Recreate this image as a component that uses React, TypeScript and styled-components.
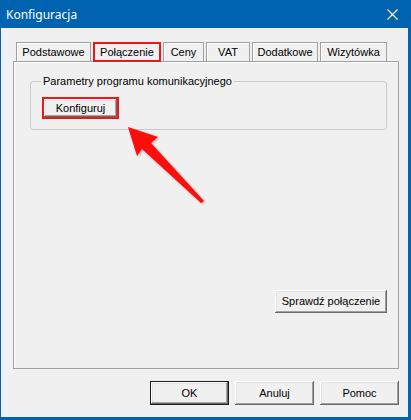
import React from 'react';
import styled, { createGlobalStyle, css } from 'styled-components';

const GlobalStyle = createGlobalStyle`
  html, body { margin: 0; padding: 0; background: #ffffff; }
  body { font-family: "Liberation Sans", Arial, sans-serif; }
  * { box-sizing: border-box; }
`;

const RED = '#f21515';

const Window = styled.div`
  position: relative;
  width: 411px;
  height: 420px;
  background: #0063b1;
  display: flex;
  flex-direction: column;
  overflow: hidden;
`;

const TitleBar = styled.div`
  height: 28px;
  flex: none;
  display: flex;
  align-items: center;
  justify-content: space-between;
  padding: 0 13px 0 6px;
  color: #ffffff;
  font-family: "Noto Sans", "Open Sans", sans-serif;
  font-size: 12px;
`;

const Body = styled.div`
  flex: 1;
  margin: 0 3px 3px 1px;
  background: #f0f0f0;
  padding: 14px 9px 12px 12px;
  display: flex;
  flex-direction: column;
  font-family: "Liberation Sans", Arial, sans-serif;
  font-size: 11px;
  color: #000000;
`;

const TabStrip = styled.div`
  height: 19px;
  flex: none;
  display: flex;
  align-items: flex-start;
  gap: 2px;
  padding-left: 3px;
  position: relative;
  z-index: 1;
`;

const Tab = styled.div<{ $w: number; $active?: boolean }>`
  width: ${(p) => p.$w}px;
  height: 19px;
  border: 1px solid #a0a0a0;
  border-bottom: none;
  box-shadow: inset 1px 1px 0 #ffffff;
  background: #f0f0f0;
  text-align: center;
  line-height: 18px;
  white-space: nowrap;
  ${(p) =>
    p.$active &&
    css`
      height: 20px;
      border: 2px solid ${RED};
      box-shadow: none;
      line-height: 16px;
    `}
`;

const Panel = styled.div`
  height: 308px;
  flex: none;
  border: 1px solid #a0a0a0;
  box-shadow: inset 1px 1px 0 #ffffff;
  padding: 0 11px 55px 16px;
  display: flex;
  flex-direction: column;
`;

const GroupBox = styled.fieldset`
  margin: 13px 0 0 0;
  padding: 11px 0 12px 13px;
  border: 1px solid #cacaca;
  border-radius: 3px;
  min-width: 0;
`;

const Legend = styled.legend`
  margin-left: -3px;
  padding: 0 2px;
  line-height: 13px;
`;

const Button = styled.button<{ $w: number; $h: number; $default?: boolean; $highlight?: boolean }>`
  width: ${(p) => p.$w}px;
  height: ${(p) => p.$h}px;
  padding: 0;
  margin: 0;
  font: inherit;
  color: #000000;
  background: #f0f0f0;
  border: none;
  line-height: ${(p) => p.$h}px;
  box-shadow: inset -1px -1px 0 #696969, inset 1px 1px 0 #ffffff,
    inset -2px -2px 0 #a0a0a0, inset 2px 2px 0 #e3e3e3;
  ${(p) =>
    p.$default &&
    css`
      border: 1px solid #1a1a1a;
      line-height: ${p.$h - 2}px;
    `}
  ${(p) =>
    p.$highlight &&
    css`
      outline: 2px solid ${RED};
      outline-offset: 0;
    `}
`;

const BottomRight = styled.div`
  margin-top: auto;
  display: flex;
  justify-content: flex-end;
`;

const Footer = styled.div`
  margin-top: 12px;
  display: flex;
  justify-content: flex-end;
  gap: 6px;
`;

const ArrowSvg = styled.svg`
  position: absolute;
  left: 120px;
  top: 120px;
  pointer-events: none;
  overflow: visible;
`;

const tabs: { label: string; w: number; active?: boolean }[] = [
  { label: 'Podstawowe', w: 75 },
  { label: 'Połączenie', w: 68, active: true },
  { label: 'Ceny', w: 41 },
  { label: 'VAT', w: 44 },
  { label: 'Dodatkowe', w: 66 },
  { label: 'Wizytówka', w: 67 },
];

export default function App() {
  return (
    <>
      <GlobalStyle />
      <Window>
        <TitleBar>
          <span>Konfiguracja</span>
          <svg width="11" height="11" viewBox="0 0 11 11">
            <path d="M0.5 0.5 L10.5 10.5 M10.5 0.5 L0.5 10.5" stroke="#ffffff" strokeWidth="1.1" />
          </svg>
        </TitleBar>
        <Body>
          <TabStrip>
            {tabs.map((t) => (
              <Tab key={t.label} $w={t.w} $active={t.active}>
                {t.label}
              </Tab>
            ))}
          </TabStrip>
          <Panel>
            <GroupBox>
              <Legend>Parametry programu komunikacyjnego</Legend>
              <Button $w={73} $h={18} $highlight>
                Konfiguruj
              </Button>
            </GroupBox>
            <BottomRight>
              <Button $w={112} $h={23}>
                Sprawdź połączenie
              </Button>
            </BottomRight>
          </Panel>
          <Footer>
            <Button $w={79} $h={24} $default>
              OK
            </Button>
            <Button $w={79} $h={24}>
              Anuluj
            </Button>
            <Button $w={79} $h={24}>
              Pomoc
            </Button>
          </Footer>
        </Body>
        <ArrowSvg width="90" height="90" viewBox="0 0 90 90">
          <defs>
            <filter id="sh" x="-20%" y="-20%" width="140%" height="140%">
              <feDropShadow dx="1" dy="1" stdDeviation="1.2" floodColor="#000" floodOpacity="0.3" />
            </filter>
          </defs>
          <polygon
            points="8,7 38,17 31,23 84,81 81,83 22,29 17,36"
            fill="#ff0a0a"
            filter="url(#sh)"
          />
        </ArrowSvg>
      </Window>
    </>
  );
}
